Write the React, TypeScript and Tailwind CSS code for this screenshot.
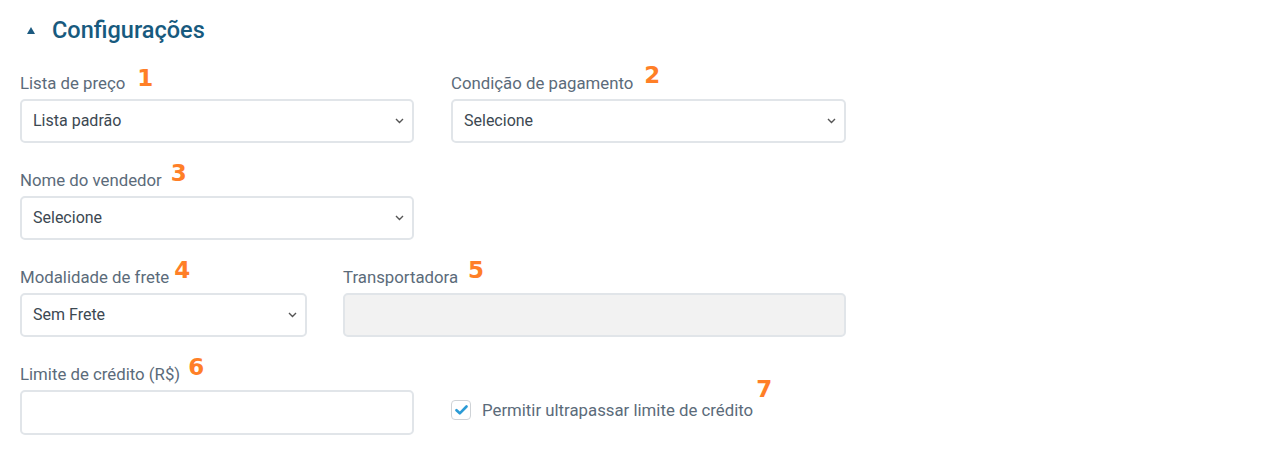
import React from "react";

const Num = ({ n, gap, top }: { n: string; gap: string; top: string }) => (
    <span
        className={`absolute ${gap} ${top} text-[23px] leading-[24px] font-bold text-[#ff7f27] whitespace-nowrap`}
        style={{ fontFamily: '"DejaVu Sans", sans-serif' }}
    >
        {n}
    </span>
);

const Label = ({ text, children }: { text: string; children?: React.ReactNode }) => (
    <div className="h-[20px] mb-[7px]">
        <span className="relative inline-block text-[16.8px] leading-[20px] text-[#5b6b7a] whitespace-nowrap">
            {text}
            {children}
        </span>
    </div>
);

const Chevron = () => (
    <svg width="9" height="6" viewBox="0 0 9 6" className="shrink-0">
        <path d="M1 1l3.5 3.5L8 1" fill="none" stroke="#555" strokeWidth="1.4" />
    </svg>
);

const Select = ({ value, width }: { value: string; width: string }) => (
    <div
        className={`${width} h-[44px] border-2 border-[#e1e5e9] rounded-[5px] bg-white flex items-center justify-between pl-[11px] pr-[8px]`}
    >
        <span className="text-[16px] text-[#3c4852]">{value}</span>
        <Chevron />
    </div>
);

export default function App() {
    return (
        <div className="w-[1288px] h-[451px] bg-white px-5 pt-[14px]" style={{ fontFamily: "Roboto, sans-serif" }}>
            <div className="flex items-center h-[32px] mb-[26px]">
                <svg width="8" height="7" viewBox="0 0 8 7" className="ml-[7px] mr-[17px]">
                    <path d="M4 0L8 7H0z" fill="#1c5a80" />
                </svg>
                <h2 className="text-[23.5px] font-medium text-[#175a7e] leading-[32px]">Configurações</h2>
            </div>

            <div className="flex gap-[37px] mb-[26px]">
                <div>
                    <Label text="Lista de preço">
                        <Num n="1" gap="left-[calc(100%+12px)]" top="-top-[7px]" />
                    </Label>
                    <Select value="Lista padrão" width="w-[394px]" />
                </div>
                <div>
                    <Label text="Condição de pagamento">
                        <Num n="2" gap="left-[calc(100%+11px)]" top="-top-[10px]" />
                    </Label>
                    <Select value="Selecione" width="w-[395px]" />
                </div>
            </div>

            <div className="flex gap-[37px] mb-[26px]">
                <div>
                    <Label text="Nome do vendedor">
                        <Num n="3" gap="left-[calc(100%+9px)]" top="-top-[9px]" />
                    </Label>
                    <Select value="Selecione" width="w-[394px]" />
                </div>
            </div>

            <div className="flex gap-[36px] mb-[26px]">
                <div>
                    <Label text="Modalidade de frete">
                        <Num n="4" gap="left-[calc(100%+5px)]" top="-top-[9px]" />
                    </Label>
                    <Select value="Sem Frete" width="w-[287px]" />
                </div>
                <div>
                    <Label text="Transportadora">
                        <Num n="5" gap="left-[calc(100%+10px)]" top="-top-[9px]" />
                    </Label>
                    <div className="w-[503px] h-[44px] border-2 border-[#e1e5e9] rounded-[5px] bg-[#f2f2f2]" />
                </div>
            </div>

            <div className="flex gap-[37px]">
                <div>
                    <Label text="Limite de crédito (R$)">
                        <Num n="6" gap="left-[calc(100%+8px)]" top="-top-[9px]" />
                    </Label>
                    <div className="w-[394px] h-[45px] border-2 border-[#e1e5e9] rounded-[5px] bg-white" />
                </div>
                <div className="pt-[37px]">
                    <label className="flex items-center gap-[11px]">
                        <span className="w-[20px] h-[20px] border border-[#cfd3d7] rounded-[4px] bg-white flex items-center justify-center">
                            <svg width="13" height="10" viewBox="0 0 13 10">
                                <path d="M1.5 5.2l3.3 3.1L11.5 1.5" fill="none" stroke="#2b9bd6" strokeWidth="2.6" strokeLinecap="round" strokeLinejoin="round" />
                            </svg>
                        </span>
                        <span className="relative text-[16.8px] leading-[20px] text-[#5b6b7a] whitespace-nowrap">
                            Permitir ultrapassar limite de crédito
                            <Num n="7" gap="left-[calc(100%+3px)]" top="-top-[23px]" />
                        </span>
                    </label>
                </div>
            </div>
        </div>
    );
}
